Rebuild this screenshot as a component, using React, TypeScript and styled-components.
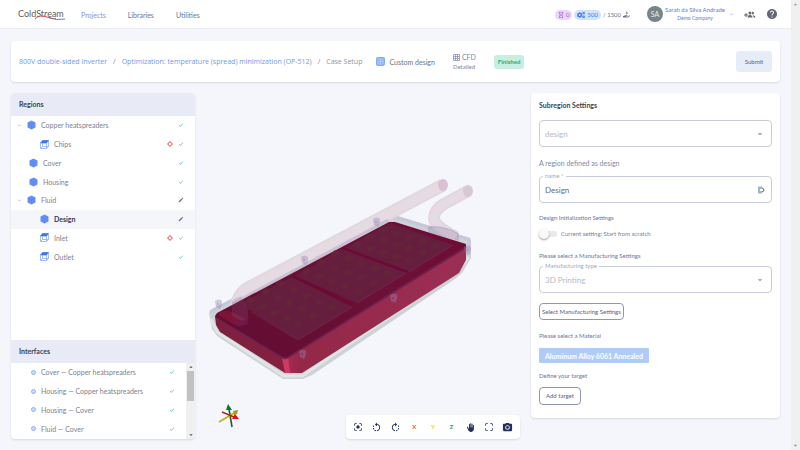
import React from "react";
import styled, { createGlobalStyle, css } from "styled-components";
import {
  MdCenterFocusStrong,
  MdRotateLeft,
  MdRotateRight,
  MdBackHand,
  MdCropFree,
  MdPhotoCamera,
  MdHelp,
  MdCheck,
  MdEdit,
  MdArrowDropDown,
  MdArrowDropUp,
} from "react-icons/md";
import { FaCogs, FaRegHourglass, FaHandHoldingUsd } from "react-icons/fa";
import { ChevronDown } from "lucide-react";

const Global = createGlobalStyle`
  *, *::before, *::after { box-sizing: border-box; }
  body {
    margin: 0;
    background: #f5f6fb;
    color: #6e7385;
    font-family: Lato, "Open Sans", sans-serif;
    font-size: 7px;
    line-height: 10px;
  }
  button, input, select { font: inherit; color: inherit; margin: 0; }
  button { background: none; border: 0; padding: 0; cursor: pointer; }
  a { text-decoration: none; color: inherit; }
  ul, ol { list-style: none; margin: 0; padding: 0; }
  h2, p { margin: 0; font-size: inherit; font-weight: inherit; }
  svg { display: block; flex: none; }
`;

const Shell = styled.div`
  display: grid;
  grid-template-columns: 1fr 9px;
  min-height: 100vh;
`;

const Page = styled.div`
  display: flex;
  flex-direction: column;
  min-width: 0;
`;

const ScrollTrack = styled.div<{ $inner?: boolean }>`
  display: flex;
  flex-direction: column;
  justify-content: space-between;
  align-items: center;
  background: #f0f0f1;
  color: ${(p) => (p.$inner ? "#555" : "#999")};
`;

const Thumb = styled.div`
  width: 7px;
  height: 30px;
  background: #c1c1c3;
`;

const Grow = styled.div`
  flex: 1;
`;

const Header = styled.header`
  display: flex;
  align-items: center;
  height: 29px;
  padding: 0 13px 0 18px;
  background: #fff;
  border-bottom: 1px solid #eceef4;
`;

const Nav = styled.nav`
  display: flex;
  gap: 22px;
  margin: 2px auto 0 14px;
`;

const NavLink = styled.a<{ $active?: boolean }>`
  color: ${(p) => (p.$active ? "#8493e6" : "#6f7488")};
`;

const Credits = styled.div`
  display: flex;
  align-items: center;
  gap: 2px;
  margin: 1px 17px 0 0;
  font-size: 6px;
`;

const Pill = styled.span<{ $tone: "violet" | "blue" }>`
  display: flex;
  align-items: center;
  gap: 2px;
  height: 10px;
  padding: 0 3px;
  border-radius: 5px;
  color: ${(p) => (p.$tone === "violet" ? "#a458dd" : "#3f7de8")};
  background: ${(p) => (p.$tone === "violet" ? "#ead6fb" : "#d3e3fc")};
`;

const Avatar = styled.span`
  display: grid;
  place-items: center;
  width: 16px;
  height: 16px;
  border-radius: 50%;
  background: #76858a;
  color: #e9edee;
`;

const Account = styled.button`
  display: flex;
  align-items: center;
  gap: 2px;
  color: #5f76e0;
`;

const AccountName = styled.span`
  display: flex;
  flex-direction: column;
  line-height: 8px;
  margin-right: 2px;
  font-size: 6px;
  small { font-size: 5px; }
`;

const IconButton = styled.button`
  display: grid;
  place-items: center;
  margin-left: 10px;
  color: #626675;
`;

const cardStyle = css`
  background: #fff;
  border-radius: 4px;
  box-shadow: 0 1px 2px rgba(50, 60, 100, 0.16);
`;

const TitleBar = styled.section`
  ${cardStyle}
  display: flex;
  align-items: center;
  height: 41px;
  margin: 12px 11px 11px;
  padding: 0 8px;
`;

const Crumbs = styled.ol`
  display: flex;
  white-space: nowrap;
  font-family: "Open Sans", "Noto Sans", sans-serif;
  color: #8c93a8;
  a { color: #6f9aee; }
  li + li::before { content: "/"; margin: 0 6px; color: #7e8498; }
`;

const Tag = styled.div`
  display: flex;
  align-items: center;
  gap: 4px;
  margin-left: 14px;
`;

const Method = styled.div`
  margin-left: 18px;
  color: #8087a0;
  line-height: 9px;
  small { display: block; font-size: 6px; }
`;

const MethodName = styled.div`
  display: flex;
  align-items: center;
  gap: 2px;
`;

const Status = styled.span`
  margin: 0 auto 0 18px;
  padding: 2px 4px;
  border-radius: 3px;
  background: #c7efe0;
  color: #30aa7d;
  font-weight: 700;
  font-size: 6px;
`;

const Submit = styled.button`
  width: 36px;
  height: 21px;
  border-radius: 3px;
  background: #e7edf8;
  color: #4f5d80;
  font-size: 6px;
`;

const Workspace = styled.main`
  display: grid;
  grid-template-columns: 184px 1fr 249px;
  flex: 1;
  padding: 0 11px 11px;
`;

const Side = styled.aside`
  ${cardStyle}
  display: flex;
  flex-direction: column;
  overflow: hidden;
`;

const SideTitle = styled.h2`
  height: 23px;
  padding: 0 8px;
  background: #e8ebf5;
  color: #3a4054;
  font-weight: 700;
  line-height: 23px;
`;

const TreeArea = styled.nav`
  flex: 1;
  min-height: 224px;
`;

const RowList = styled.ul<{ $height: number }>`
  display: grid;
  grid-auto-rows: 1fr;
  height: ${(p) => p.$height}px;
`;

const Row = styled.li<{ $active?: boolean }>`
  display: flex;
  background: ${(p) => (p.$active ? "#f5f6f9" : "transparent")};
`;

const RowButton = styled.button<{ $indent: number; $active?: boolean }>`
  display: flex;
  align-items: center;
  width: 100%;
  padding: 0 11px 0 ${(p) => p.$indent}px;
  gap: 5px;
  text-align: left;
  color: ${(p) => (p.$active ? "#323a5c" : "#7d8190")};
  font-weight: ${(p) => (p.$active ? 700 : 400)};
`;

const Label = styled.span`
  margin-right: auto;
`;

const Interfaces = styled.div`
  display: grid;
  grid-template-columns: 1fr 9px;
  height: 76px;
`;

const Viewer = styled.section`
  display: flex;
  flex-direction: column;
  min-width: 0;
`;

const Model = styled.svg`
  flex: 1;
  width: 100%;
  min-height: 0;
`;

const ViewerFoot = styled.div`
  display: flex;
  align-items: flex-end;
  justify-content: space-between;
  padding: 0 11px 0 20px;
`;

const TriadBox = styled.div`
  padding-bottom: 11px;
`;

const Toolbar = styled.div`
  ${cardStyle}
  display: flex;
  justify-content: space-around;
  width: 174px;
  height: 24px;
  padding: 0 3px;
`;

const Tool = styled.button<{ $color?: string }>`
  display: grid;
  place-items: center;
  width: 18px;
  color: ${(p) => p.$color || "#22305c"};
  font-weight: 700;
  font-size: 6px;
`;

const Settings = styled.form`
  ${cardStyle}
  display: flex;
  flex-direction: column;
  align-items: flex-start;
  align-self: start;
  padding: 7px 8px 13px;
  color: #8189a8;
`;

const SettingsTitle = styled.h2`
  color: #3d4254;
  font-weight: 700;
  margin-bottom: 10px;
`;

const Hint = styled.p`
  margin: 11px 0 8px;
`;

const Caption = styled.p`
  font-size: 6px;
  font-weight: 500;
  color: #7780a0;
`;

const FieldBox = styled.div<{ $muted?: boolean }>`
  position: relative;
  display: flex;
  align-items: center;
  width: 100%;
  height: 27px;
  padding: 0 6px 0 5px;
  border: 1px solid #c9ccdc;
  border-radius: 4px;
  font-size: 8px;
  color: ${(p) => (p.$muted ? "#b6bac8" : "#666c80")};
  input, select {
    flex: 1;
    min-width: 0;
    padding: 0;
    border: 0;
    outline: 0;
    opacity: 1;
    background: none;
    appearance: none;
    color: inherit;
  }
`;

const Legend = styled.label`
  position: absolute;
  top: -6px;
  left: 3px;
  padding: 0 2px;
  background: #fff;
  color: #a3a8bb;
  font-size: 6px;
`;

const DropIcon = styled(MdArrowDropDown)`
  color: #8a8f9f;
`;

const Group = styled.section`
  display: flex;
  flex-direction: column;
  align-items: flex-start;
  width: 100%;
  gap: 5px;
  margin-top: 12px;
`;

const InitGroup = styled(Group)`
  gap: 6px;
  margin-top: 10px;
`;

const SwitchRow = styled.label`
  display: flex;
  align-items: center;
  gap: 4px;
  font-size: 6px;
  color: #7780a0;
`;

const Switch = styled.input`
  appearance: none;
  width: 18px;
  height: 6px;
  margin: 0;
  border-radius: 3px;
  background: #e9e9eb;
  &::before {
    content: "";
    display: block;
    width: 10px;
    height: 10px;
    margin: -2px 0;
    border-radius: 50%;
    background: #fafafa;
    box-shadow: 0 1px 2px rgba(0, 0, 0, 0.4);
  }
`;

const Outline = styled.button`
  height: 17px;
  padding: 0 2px;
  margin: 10px 0 11px;
  border: 1px solid #8f97b0;
  border-radius: 4px;
  color: #56617f;
  font-size: 6px;
`;

const Target = styled(Outline)`
  height: 18px;
  padding: 0 6px;
  margin: 6px 0 0;
`;

const Material = styled.button`
  height: 15px;
  margin: 7px 0 8px;
  padding: 0 6px;
  border-radius: 1px;
  background: #afccf8;
  color: #fff;
  font-weight: 700;
`;

const Cube = () => (
  <svg width="9" height="10" viewBox="0 0 18 20">
    <path d="M9 1 17 5v10l-8 4-8-4V5z" fill="#638ff7" />
    <path d="M2 6l7 4 7-4M9 10v8" fill="none" stroke="#5582ec" strokeWidth="1.2" />
  </svg>
);

const Face = () => (
  <svg width="9" height="9" viewBox="0 0 18 18" fill="none" stroke="#7ba3f5" strokeWidth="1.4">
    <path d="M5 1h12l-4 5H1z" fill="#3777f0" stroke="#3777f0" />
    <path d="M1 6v11h12V6M13 17l4-4V1M5 6v7h12M5 13l-4 4" />
  </svg>
);

const Ring = () => (
  <svg width="5" height="5" viewBox="0 0 10 10">
    <circle cx="5" cy="5" r="4" fill="#cbdcfc" stroke="#7ba2f3" strokeWidth="1.6" />
  </svg>
);

const Crosshair = () => (
  <svg width="6" height="6" viewBox="0 0 12 12" fill="none" stroke="#f0685d">
    <circle cx="6" cy="6" r="3.8" strokeWidth="1.8" />
    <path d="M6 0v3M6 9v3M0 6h3M9 6h3" strokeWidth="1.6" />
  </svg>
);

const Mesh = () => (
  <svg width="7" height="7" viewBox="0 0 14 14" fill="none" stroke="#8087a0" strokeWidth="1.4">
    <path d="M1 1h12v12H1zM1 5h12M1 9h12M5 1v12M9 1v12" />
  </svg>
);

const People = () => (
  <svg width="12" height="9" viewBox="0 0 24 18" fill="#626675">
    <path d="M3 6h2v3h3v2H5v3H3v-3H0V9h3z" />
    <circle cx="12" cy="6" r="3" />
    <path d="M7 15q0-5 5-5t5 5zM17 3a3 3 0 0 1 0 6q-1 0-1-1 1-2 0-4zM18 10q5 1 5 5h-4q0-3-1-5z" />
  </svg>
);

const Logo = () => (
  <svg width="49" height="18" viewBox="0 0 49 18" role="img" aria-label="ColdStream">
    <text x="0" y="12" fontFamily="Lato, sans-serif" fontSize="9" fill="#606060">ColdStream</text>
    <path d="M17 14Q22 9 29 12T38 13" fill="none" stroke="#de4e54" />
    <path d="M30 12Q38 16 47 14" fill="none" stroke="#5781cc" />
  </svg>
);

const CHIP_ROWS = [
  { x: 250, y: 300, dx: 12, dy: 6 },
  { x: 265, y: 291, dx: 12, dy: 6 },
  { x: 280, y: 283, dx: 13, dy: 6 },
  { x: 306, y: 271, dx: 13, dy: 5 },
  { x: 321, y: 262, dx: 13, dy: 5 },
  { x: 335, y: 253, dx: 13, dy: 5 },
  { x: 357, y: 244, dx: 13, dy: 4 },
  { x: 370, y: 236, dx: 13, dy: 4 },
  { x: 383, y: 229, dx: 13, dy: 4 },
];

const Chips = () => (
  <g fill="#652b36" opacity="0.6">
    {CHIP_ROWS.map((row) =>
      [0, 1, 2, 3, 4].map((c) => (
        <path
          key={`${row.x}-${c}`}
          d={`M${row.x + c * row.dx - 5} ${row.y + c * row.dy + 1}l5-4 5 2v2l-5 3z`}
        />
      ))
    )}
  </g>
);

const LUGS = [
  [219, 304],
  [305, 260],
  [377, 222],
  [303, 354],
  [394, 298],
  [468, 250],
];

const Inverter = () => (
  <Model viewBox="195 93 336 308" preserveAspectRatio="xMidYMin" role="img" aria-label="Double-sided inverter model">
    <defs>
      <linearGradient id="front" x1="0" x2="1" y1="0" y2="0">
        <stop offset="0" stopColor="#a52c52" />
        <stop offset="0.06" stopColor="#942849" />
        <stop offset="1" stopColor="#9b2e53" />
      </linearGradient>
      <linearGradient id="left" x1="0" x2="1" y1="0" y2="0">
        <stop offset="0" stopColor="#7c2040" />
        <stop offset="1" stopColor="#86203f" />
      </linearGradient>
      <linearGradient id="lid" x1="0" x2="1" y1="1" y2="0">
        <stop offset="0" stopColor="#620c31" />
        <stop offset="0.6" stopColor="#6c1038" />
        <stop offset="1" stopColor="#700b35" />
      </linearGradient>
    </defs>
    <path
      d="M209 313l3-4 176-91 10-2 71 22 2 3v17l-9 15-7 6-143 96-9 4h-20l-66-43-5-7z"
      fill="#cdd2d7"
    />
    <path d="M211 319l6 13 67 44h18l154-104 13-15" fill="none" stroke="#dfe4e5" strokeWidth="3" />
    <path d="M210 312l178-95 10 1 71 21v10" fill="none" stroke="#c9c5da" strokeWidth="3" />
    <g fill="none" strokeLinejoin="round">
      <path d="M443 185L250 287Q237 294 237 307v9" stroke="#e0d7df" strokeWidth="13" />
      <path d="M443 185L250 287Q237 294 237 307v9" stroke="#e6dbe3" strokeWidth="9" />
      <path d="M468 191l-24 13q-10 6-10 14t22 19" stroke="#dfd6de" strokeWidth="12" />
      <path d="M468 191l-24 13q-10 6-10 14t22 19" stroke="#e6dbe3" strokeWidth="8" />
    </g>
    <path d="M232 304L388 220" stroke="#a99bc0" strokeWidth="3" opacity="0.35" />
    <ellipse cx="443" cy="185" rx="5" ry="6" fill="#d9c1d1" />
    <ellipse cx="468" cy="191" rx="5" ry="6" fill="#d7c9d3" />
    <path d="M215 316l67 41 6 16h-3l-65-41-4-7z" fill="url(#left)" />
    <path d="M288 356l178-110v14l-7 13-157 100h-14z" fill="url(#front)" />
    <path d="M282 358q3 2 6-1l2 16h-5z" fill="#cf3a63" />
    <path d="M215 316l2-3 172-91h6l71 22v4L289 357q-4 3-8 0l-65-39z" fill="url(#lid)" />
    <path d="M216 318l65 39q4 3 8 0l177-110" fill="none" stroke="#6e2450" strokeWidth="2" opacity="0.8" />
    <path
      d="M243 302l49-25 60 30-54 33-53-33zM295 276l47-27 64 24-49 30zM345 248l45-25 63 22-44 27z"
      fill="#651e3e"
    />
    <path
      d="M252 312l46 28 54-33M357 303l49-30M409 272l44-27"
      fill="none"
      stroke="#7c3450"
      opacity="0.6"
    />
    <path d="M292 276l61 29M343 248l65 24" stroke="#6c0a32" strokeWidth="2" />
    <Chips />
    <path d="M220 312q6-3 12 0l12 6q5 4 0 7t-9 0l-14-8q-4-2-1-5z" fill="#8d1839" opacity="0.6" />
    <path d="M232 302q2-4 9-6l7 14v10q-8 2-16-4z" fill="#87658a" opacity="0.2" />
    <path d="M236 320q6 3 12-1v5q-5 3-12 0z" fill="#64225f" opacity="0.5" />
    <path d="M428 227q14-2 31 7v7l-31-8z" fill="#85669b" opacity="0.25" />
    <path d="M429 227q14-2 30 7" fill="none" stroke="#a294ba" opacity="0.6" />
    {LUGS.map(([x, y]) => (
      <g key={x} opacity="0.4">
        <path d={`M${x - 4} ${y - 3}q4-3 7 0v4l-2 4-4-2z`} fill="#9a84b5" />
        <circle cx={x - 1} cy={y} r="1" fill="#5f4a78" />
      </g>
    ))}
  </Model>
);

const Triad = () => (
  <svg width="26" height="27" viewBox="0 0 26 27">
    <path d="M17 26L14 8" stroke="#11682b" strokeWidth="1.6" />
    <path d="M13 3l4 6h-6z" fill="#087a20" />
    <path d="M4 21L19 12" stroke="#bcb11d" strokeWidth="1.6" />
    <path d="M18 10l5-1-1 4-3 1z" fill="#a59c19" />
    <path d="M7 11l12 5" stroke="#a92525" strokeWidth="1.4" />
    <path d="M20 13l4 5-7 0z" fill="#e80f18" />
  </svg>
);

type Region = {
  name: string;
  indent: number;
  icon: "cube" | "face";
  open?: boolean;
  target?: boolean;
  mark: "check" | "edit";
  active?: boolean;
};

const REGIONS: Region[] = [
  { name: "Copper heatspreaders", indent: 6, icon: "cube", open: true, mark: "check" },
  { name: "Chips", indent: 29, icon: "face", target: true, mark: "check" },
  { name: "Cover", indent: 18, icon: "cube", mark: "check" },
  { name: "Housing", indent: 18, icon: "cube", mark: "check" },
  { name: "Fluid", indent: 6, icon: "cube", open: true, mark: "edit" },
  { name: "Design", indent: 29, icon: "cube", mark: "edit", active: true },
  { name: "Inlet", indent: 29, icon: "face", target: true, mark: "check" },
  { name: "Outlet", indent: 29, icon: "face", mark: "check" },
];

const INTERFACES = [
  "Cover — Copper heatspreaders",
  "Housing — Copper heatspreaders",
  "Housing — Cover",
  "Fluid — Cover",
];

export default function App() {
  return (
    <Shell>
      <Global />
      <Page>
        <Header>
          <a href="#home"><Logo /></a>
          <Nav>
            <NavLink href="#projects" $active>Projects</NavLink>
            <NavLink href="#libraries">Libraries</NavLink>
            <NavLink href="#utilities">Utilities</NavLink>
          </Nav>
          <Credits>
            <Pill $tone="violet"><FaRegHourglass size={6} />0</Pill>
            <Pill $tone="blue"><FaCogs size={8} />500</Pill>
            <span>/ 1500</span>
            <FaHandHoldingUsd size={7} />
          </Credits>
          <Account>
            <Avatar>SA</Avatar>
            <AccountName>Sarah da Silva Andrade<small>Demo Company</small></AccountName>
            <ChevronDown size={5} />
          </Account>
          <IconButton aria-label="Invite people"><People /></IconButton>
          <IconButton aria-label="Help"><MdHelp size={12} /></IconButton>
        </Header>

        <TitleBar>
          <Crumbs>
            <li><a href="#inverter">800V double-sided inverter</a></li>
            <li><a href="#optimization">Optimization: temperature (spread) minimization (OP-512)</a></li>
            <li>Case Setup</li>
          </Crumbs>
          <Tag>
            <svg width="9" height="9" viewBox="0 0 18 18">
              <rect width="18" height="18" rx="4" fill="#7eacf8" />
              <path d="M4 4h10v10H4zM4 9h10M9 4v10" fill="none" stroke="#c5dafc" strokeWidth="1.5" />
            </svg>
            Custom design
          </Tag>
          <Method>
            <MethodName><Mesh />CFD</MethodName>
            <small>Detailed</small>
          </Method>
          <Status>Finished</Status>
          <Submit>Submit</Submit>
        </TitleBar>

        <Workspace>
          <Side>
            <SideTitle>Regions</SideTitle>
            <TreeArea>
              <RowList $height={150}>
                {REGIONS.map((r) => (
                  <Row key={r.name} $active={r.active}>
                    <RowButton $indent={r.indent} $active={r.active}>
                      {r.open && <ChevronDown size={5} />}
                      {r.icon === "cube" ? <Cube /> : <Face />}
                      <Label>{r.name}</Label>
                      {r.target && <Crosshair />}
                      {r.mark === "check" ? <MdCheck size={6} color="#35b889" /> : <MdEdit size={6} color="#6d7184" />}
                    </RowButton>
                  </Row>
                ))}
              </RowList>
            </TreeArea>
            <SideTitle>Interfaces</SideTitle>
            <Interfaces>
              <RowList $height={75}>
                {INTERFACES.map((name) => (
                  <Row key={name}>
                    <RowButton $indent={20}>
                      <Ring />
                      <Label>{name}</Label>
                      <MdCheck size={6} color="#35b889" />
                    </RowButton>
                  </Row>
                ))}
              </RowList>
              <ScrollTrack $inner>
                <MdArrowDropUp size={8} />
                <Thumb />
                <Grow />
                <MdArrowDropDown size={8} />
              </ScrollTrack>
            </Interfaces>
          </Side>

          <Viewer>
            <Inverter />
            <ViewerFoot>
              <TriadBox><Triad /></TriadBox>
              <Toolbar role="toolbar" aria-label="View">
                <Tool aria-label="Center"><MdCenterFocusStrong size={10} /></Tool>
                <Tool aria-label="Rotate left"><MdRotateLeft size={11} /></Tool>
                <Tool aria-label="Rotate right"><MdRotateRight size={11} /></Tool>
                <Tool $color="#ef5350">X</Tool>
                <Tool $color="#f2cb3d">Y</Tool>
                <Tool $color="#43964a">Z</Tool>
                <Tool aria-label="Pan"><MdBackHand size={9} /></Tool>
                <Tool aria-label="Fit"><MdCropFree size={10} /></Tool>
                <Tool aria-label="Capture"><MdPhotoCamera size={11} /></Tool>
              </Toolbar>
            </ViewerFoot>
          </Viewer>

          <Settings>
            <SettingsTitle>Subregion Settings</SettingsTitle>
            <FieldBox $muted>
              <select aria-label="Region type" disabled><option>design</option></select>
              <DropIcon size={10} />
            </FieldBox>
            <Hint>A region defined as design</Hint>
            <FieldBox>
              <Legend htmlFor="name">name *</Legend>
              <input id="name" defaultValue="Design" />
              <svg width="7" height="8" viewBox="0 0 14 16" fill="none" stroke="#3f7183" strokeWidth="2">
                <path d="M2 1v14M6 1v5M6 10v5M8 4q4 1 4 4t-4 4" />
              </svg>
            </FieldBox>
            <InitGroup>
              <Caption>Design Initialization Settings</Caption>
              <SwitchRow><Switch type="checkbox" />Current setting: Start from scratch</SwitchRow>
            </InitGroup>
            <Group>
              <Caption>Please select a Manufacturing Settings</Caption>
              <FieldBox $muted>
                <Legend htmlFor="process">Manufacturing type</Legend>
                <select id="process" disabled><option>3D Printing</option></select>
                <DropIcon size={10} />
              </FieldBox>
            </Group>
            <Outline type="button">Select Manufacturing Settings</Outline>
            <Caption>Please select a Material</Caption>
            <Material type="button">Aluminum Alloy 6061 Annealed</Material>
            <Caption>Define your target</Caption>
            <Target type="button">Add target</Target>
          </Settings>
        </Workspace>
      </Page>
      <ScrollTrack>
        <MdArrowDropUp size={9} />
        <MdArrowDropDown size={9} />
      </ScrollTrack>
    </Shell>
  );
}
